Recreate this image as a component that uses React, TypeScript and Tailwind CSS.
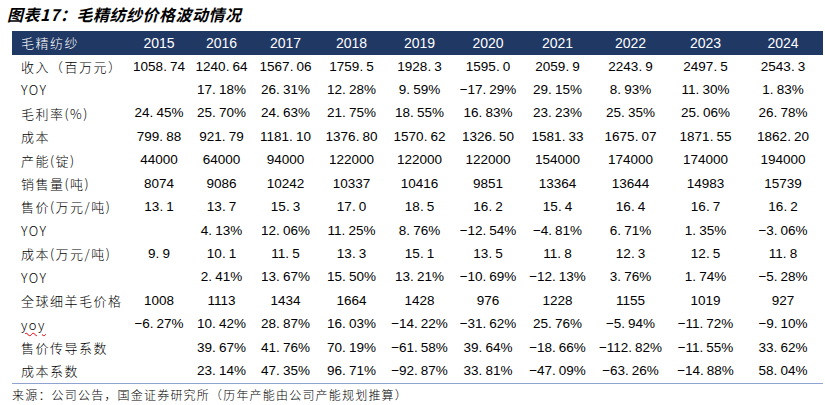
import React from 'react';

const years = ['2015', '2016', '2017', '2018', '2019', '2020', '2021', '2022', '2023', '2024'];

// column widths: label + 10 years, total 811px
const colW = ['w-[116px]', 'w-[62px]', 'w-[63px]', 'w-[65px]', 'w-[67px]', 'w-[69px]', 'w-[68px]', 'w-[71px]', 'w-[75px]', 'w-[75px]', 'w-[80px]'];

const rows: { label: string; values: string[]; wavy?: boolean }[] = [
  { label: '收入（百万元）', values: ['1058.74', '1240.64', '1567.06', '1759.5', '1928.3', '1595.0', '2059.9', '2243.9', '2497.5', '2543.3'] },
  { label: 'YOY', values: ['', '17.18%', '26.31%', '12.28%', '9.59%', '−17.29%', '29.15%', '8.93%', '11.30%', '1.83%'] },
  { label: '毛利率(%)', values: ['24.45%', '25.70%', '24.63%', '21.75%', '18.55%', '16.83%', '23.23%', '25.35%', '25.06%', '26.78%'] },
  { label: '成本', values: ['799.88', '921.79', '1181.10', '1376.80', '1570.62', '1326.50', '1581.33', '1675.07', '1871.55', '1862.20'] },
  { label: '产能(锭)', values: ['44000', '64000', '94000', '122000', '122000', '122000', '154000', '174000', '174000', '194000'] },
  { label: '销售量(吨)', values: ['8074', '9086', '10242', '10337', '10416', '9851', '13364', '13644', '14983', '15739'] },
  { label: '售价(万元/吨)', values: ['13.1', '13.7', '15.3', '17.0', '18.5', '16.2', '15.4', '16.4', '16.7', '16.2'] },
  { label: 'YOY', values: ['', '4.13%', '12.06%', '11.25%', '8.76%', '−12.54%', '−4.81%', '6.71%', '1.35%', '−3.06%'] },
  { label: '成本(万元/吨)', values: ['9.9', '10.1', '11.5', '13.3', '15.1', '13.5', '11.8', '12.3', '12.5', '11.8'] },
  { label: 'YOY', values: ['', '2.41%', '13.67%', '15.50%', '13.21%', '−10.69%', '−12.13%', '3.76%', '1.74%', '−5.28%'] },
  { label: '全球细羊毛价格', values: ['1008', '1113', '1434', '1664', '1428', '976', '1228', '1155', '1019', '927'] },
  { label: 'yoy', wavy: true, values: ['−6.27%', '10.42%', '28.87%', '16.03%', '−14.22%', '−31.62%', '25.76%', '−5.94%', '−11.72%', '−9.10%'] },
  { label: '售价传导系数', values: ['', '39.67%', '41.76%', '70.19%', '−61.58%', '39.64%', '−18.66%', '−112.82%', '−11.55%', '33.62%'] },
  { label: '成本系数', values: ['', '23.14%', '47.35%', '96.71%', '−92.87%', '33.81%', '−47.09%', '−63.26%', '−14.88%', '58.04%'] },
];

const Num = ({ v }: { v: string }) => {
  const [a, b] = v.split('.');
  if (b === undefined) return <>{v}</>;
  return (
    <>
      {a}
      <span className="pr-[3px]">.</span>
      {b}
    </>
  );
};

export default function App() {
  return (
    <div className="w-[825px] h-[405px] bg-white text-black overflow-hidden">
      <div className="h-[31px] pl-[7px] pt-[3px] text-[16px] font-bold italic tracking-[0.5px] [font-family:'Noto_Sans_CJK_SC',sans-serif] leading-[22px]">
        图表17：毛精纺纱价格波动情况
      </div>

      <div className="ml-[12px] w-[811px]">
        <div className="flex h-[24px] items-center bg-[#203864] text-white">
          <div className={`${colW[0]} pl-[9px] text-[13px] tracking-[1.5px] font-light [font-family:'Noto_Sans_CJK_SC',sans-serif]`}>
            毛精纺纱
          </div>
          {years.map((y, i) => (
            <div key={y} className={`${colW[i + 1]} text-center text-[14px] [font-family:'Liberation_Sans',Arial,sans-serif]`}>
              {y}
            </div>
          ))}
        </div>

        <div className="border-b border-[#8fa3d1]">
          {rows.map((r, ri) => (
            <div key={ri} className="flex h-[23.43px] items-center">
              <div className={`${colW[0]} pl-[9px] text-[13px] tracking-[1.5px] font-light [font-family:'Noto_Sans_CJK_SC',sans-serif]`}>
                {r.wavy ? (
                  <span className="underline decoration-wavy decoration-red-600 decoration-1 underline-offset-2">{r.label}</span>
                ) : (
                  r.label
                )}
              </div>
              {r.values.map((v, i) => (
                <div key={i} className={`${colW[i + 1]} text-center text-[13.5px] [font-family:'Liberation_Sans',Arial,sans-serif]`}>
                  <Num v={v} />
                </div>
              ))}
            </div>
          ))}
        </div>

        <div className="pt-[3px] text-[12px] tracking-[1.2px] leading-[16px] font-light [font-family:'Noto_Sans_CJK_SC',sans-serif]">
          来源：公司公告，国金证券研究所（历年产能由公司产能规划推算）
        </div>
      </div>
    </div>
  );
}
